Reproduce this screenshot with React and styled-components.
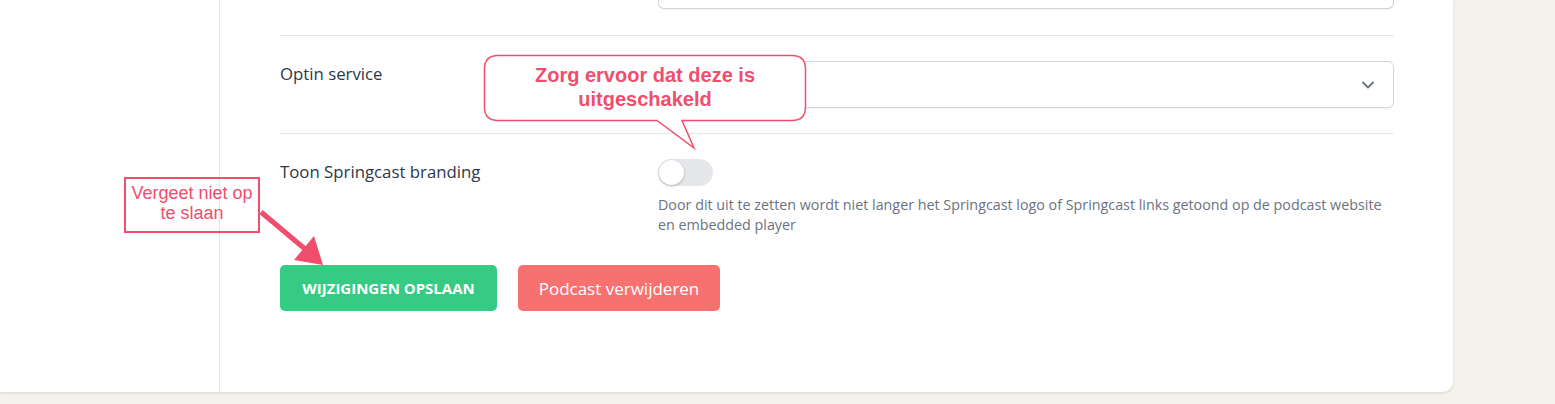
import { createGlobalStyle, styled } from 'styled-components';
import { ChevronDown } from 'lucide-react';

const GlobalStyle = createGlobalStyle`
  body {
    margin: 0;
    background: #f5f2ec;
    font-family: "Open Sans", Lato, sans-serif;
  }
`;

export default function App() {
  return (
    <Page>
      <GlobalStyle />
      <Card>
        <Sidebar />
        <Content>
          <TopRow>
            <span />
            <InputStub />
          </TopRow>
          <Divider />
          <Row>
            <Label>Optin service</Label>
            <Select>
              <ChevronDown size={20} strokeWidth={2.2} color="#6b7280" />
            </Select>
          </Row>
          <Divider />
          <Row>
            <Label>Toon Springcast branding</Label>
            <div>
              <Toggle>
                <Knob />
              </Toggle>
              <Help>
                Door dit uit te zetten wordt niet langer het Springcast logo of Springcast links getoond op de podcast website
                en embedded player
              </Help>
            </div>
          </Row>
          <Actions>
            <SaveButton>WIJZIGINGEN OPSLAAN</SaveButton>
            <DeleteButton>Podcast verwijderen</DeleteButton>
          </Actions>
        </Content>
      </Card>

      <Overlay width="1555" height="404" viewBox="0 0 1555 404">
        <path
          d="M498 55.5 H792 Q805.5 55.5 805.5 69 V107 Q805.5 120.5 792 120.5 H682 L694 148 L657 120.5 H498 Q484.5 120.5 484.5 107 V69 Q484.5 55.5 498 55.5 Z"
          fill="#fff"
          stroke="#f04e6c"
          strokeWidth="1.5"
        />
        <line x1="261" y1="212" x2="305" y2="249" stroke="#f04e6c" strokeWidth="5" />
        <polygon points="323,265 294,260 314,236" fill="#f04e6c" />
      </Overlay>
      <Bubble>
        Zorg ervoor dat deze is
        <br />
        uitgeschakeld
      </Bubble>
      <Note>
        Vergeet niet op
        <br />
        te slaan
      </Note>
    </Page>
  );
}

const Page = styled.div`
  position: relative;
  width: 1555px;
  height: 404px;
  overflow: hidden;
`;

const Card = styled.div`
  display: grid;
  grid-template-columns: 220px 1fr;
  width: 1453px;
  height: 392px;
  background: #fff;
  border-radius: 0 0 10px 0;
  box-shadow: 0 1px 3px rgba(0, 0, 0, 0.12);
`;

const Sidebar = styled.aside`
  border-right: 1px solid #e5e7eb;
`;

const Content = styled.main`
  padding: 0 59px 0 60px;
`;

const TopRow = styled.div`
  display: grid;
  grid-template-columns: 378px 1fr;
  padding-bottom: 26px;
`;

const InputStub = styled.div`
  height: 8px;
  border: 1px solid #d1d5db;
  border-top: none;
  border-radius: 0 0 6px 6px;
  box-shadow: 0 1px 2px rgba(0, 0, 0, 0.05);
`;

const Divider = styled.hr`
  margin: 0;
  border: none;
  border-top: 1px solid #e5e7eb;
`;

const Row = styled.div`
  display: grid;
  grid-template-columns: 378px 1fr;
  padding: 25px 0 25px;
`;

const Label = styled.label`
  font-size: 16.8px;
  line-height: 24px;
  margin-top: 1px;
  color: #2d3748;
`;

const Select = styled.div`
  display: flex;
  align-items: center;
  justify-content: flex-end;
  height: 45px;
  padding-right: 15px;
  border: 1px solid #d1d5db;
  border-radius: 6px;
  box-shadow: 0 1px 2px rgba(0, 0, 0, 0.05);
`;

const Toggle = styled.div`
  display: flex;
  align-items: center;
  width: 55px;
  height: 27px;
  padding: 0 1px;
  box-sizing: border-box;
  border-radius: 14px;
  background: #e5e7eb;
`;

const Knob = styled.span`
  width: 25px;
  height: 25px;
  border-radius: 50%;
  background: #fff;
  box-shadow: 0 1px 3px rgba(0, 0, 0, 0.25);
`;

const Help = styled.p`
  margin: 9px 0 0;
  font-size: 14.3px;
  line-height: 20px;
  color: #6b7280;
`;

const Actions = styled.div`
  display: flex;
  gap: 21px;
  padding-top: 5px;
`;

const Button = styled.button`
  height: 46px;
  border: none;
  border-radius: 5px;
  color: #fff;
  font-family: "Open Sans", Lato, sans-serif;
  cursor: pointer;
`;

const SaveButton = styled(Button)`
  width: 217px;
  background: #35cb83;
  font-size: 15px;
  font-weight: 700;
`;

const DeleteButton = styled(Button)`
  width: 202px;
  background: #f87171;
  font-size: 17px;
`;

const Overlay = styled.svg`
  position: absolute;
  left: 0;
  top: 0;
  pointer-events: none;
`;

const Bubble = styled.div`
  position: absolute;
  left: 484px;
  top: 63px;
  width: 322px;
  text-align: center;
  font-family: "Liberation Sans", Arial, sans-serif;
  font-weight: 700;
  font-size: 20px;
  line-height: 24px;
  color: #f04e6c;
`;

const Note = styled.div`
  position: absolute;
  left: 124px;
  top: 177px;
  width: 132px;
  height: 48px;
  padding-top: 4px;
  border: 2px solid #f04e6c;
  text-align: center;
  font-family: "Liberation Sans", Arial, sans-serif;
  font-size: 18px;
  line-height: 20px;
  color: #f04e6c;
`;
